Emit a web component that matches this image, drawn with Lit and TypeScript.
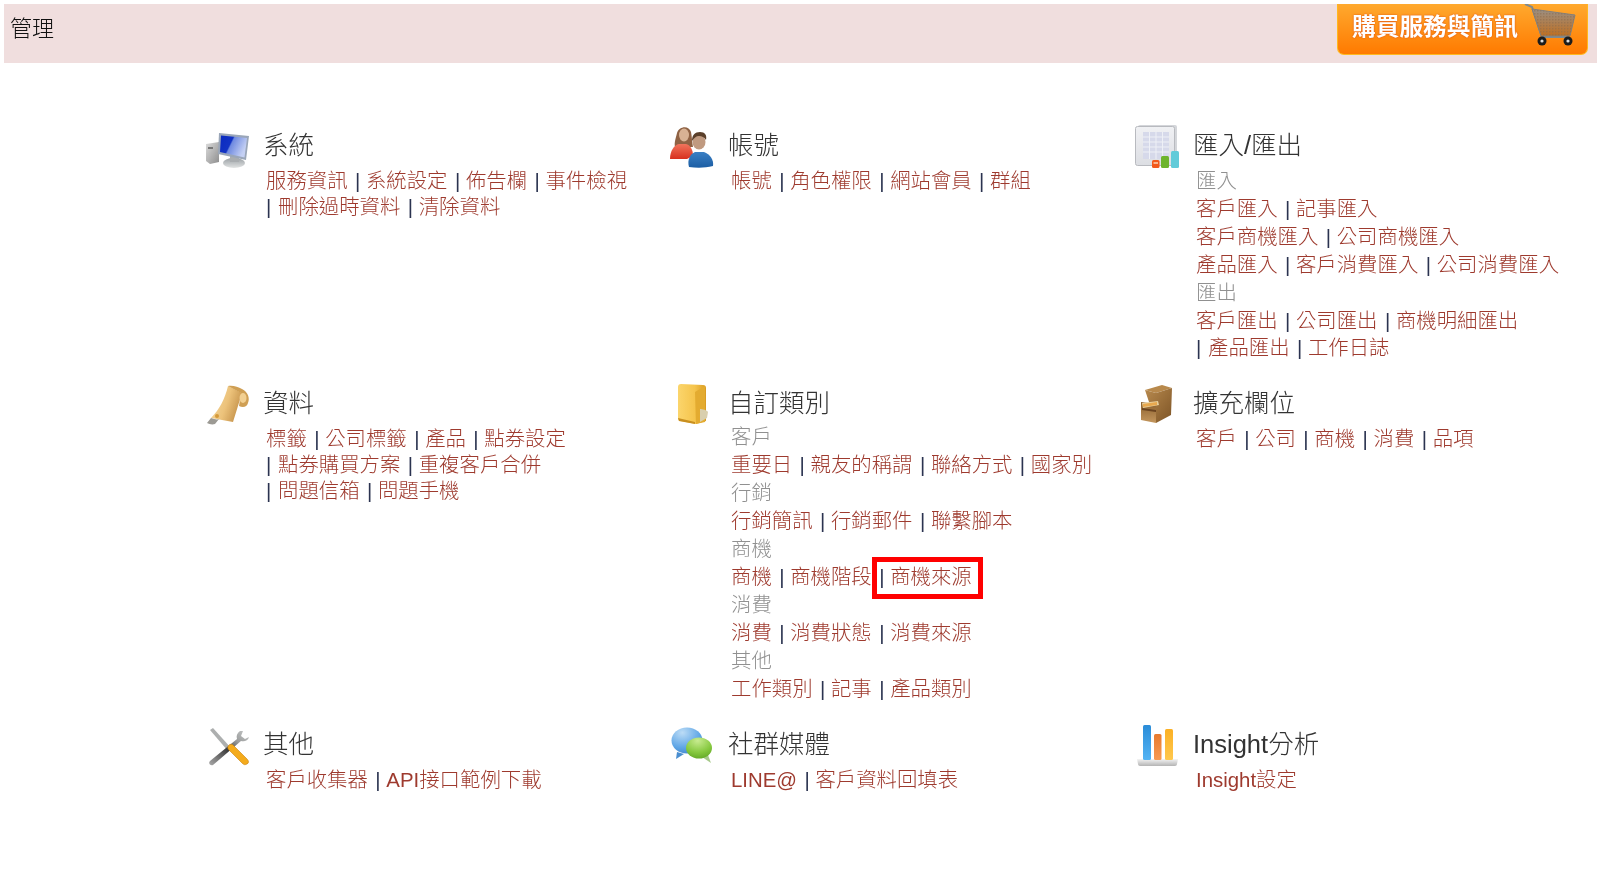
import { LitElement, html, css, svg, nothing } from "lit";
import { customElement } from "lit/decorators.js";

type Line = { label?: string; links?: string[]; wrapped?: boolean; boxed?: string };
type Section = { title: string; icon: string; kind?: string; lines: Line[] };

const icons: Record<string, unknown> = {
  monitor: svg`<defs>
      <linearGradient id="m1" x1="0" x2="1" y1="0" y2="0.4"><stop offset="0" stop-color="#0a2ac0"/><stop offset=".45" stop-color="#1233c4"/><stop offset=".5" stop-color="#6f8ae0"/><stop offset="1" stop-color="#c4d0f4"/></linearGradient>
      <linearGradient id="m2" x1="0" x2="1" y1="0" y2="1"><stop offset="0" stop-color="#dcdcdc"/><stop offset="1" stop-color="#8d8d8d"/></linearGradient>
      <linearGradient id="m3" x1="0" x2="0" y1="0" y2="1"><stop offset="0" stop-color="#9aa0a4"/><stop offset="1" stop-color="#e2e4e4"/></linearGradient>
    </defs>
    <path d="M2 22l13-2v20l-9 2-4-3z" fill="url(#m2)"/>
    <path d="M4 25h5v2H4z" fill="#777"/>
    <ellipse cx="30" cy="41" rx="11" ry="5" fill="url(#m3)"/>
    <path d="M26 33h9v7h-9z" fill="#a9adb0"/>
    <path d="M15 11l30 3-3 24-28-6z" fill="#9aa6b8"/>
    <path d="M17 13.500l26 2.500-2.500 19.500L16 30z" fill="url(#m1)"/>`,
  users: svg`<defs>
      <linearGradient id="u1" x1="0" x2="0" y1="0" y2="1"><stop offset="0" stop-color="#f0745c"/><stop offset="1" stop-color="#d8301e"/></linearGradient>
      <linearGradient id="u2" x1="0" x2="0" y1="0" y2="1"><stop offset="0" stop-color="#3b80c4"/><stop offset="1" stop-color="#1c5ea4"/></linearGradient>
    </defs>
    <path d="M6 25c-1-5 1-9 2-14 2-7 12-8 14-1 1 5 1 10 2 15z" fill="#8f6244"/>
    <ellipse cx="15" cy="13" rx="5" ry="6.500" fill="#d8b294"/>
    <path d="M1 37c0-8 4-14 9-15h7c4 1 7 5 7 12l-6 3z" fill="url(#u1)"/>
    <path d="M20 45c-2-7 1-13 6-15h9c6 2 10 8 9 14-8 2-16 2-24 1z" fill="url(#u2)"/>
    <ellipse cx="30" cy="20" rx="6.500" ry="7.500" fill="#c09a80"/>
    <path d="M23 19c0-6 3-9 8-9s7 3 6 8c-2-3-4-4-7-4s-5 2-7 5z" fill="#5a3f2a"/>`,
  table: svg`<defs>
      <linearGradient id="t1" x1="0" x2="0" y1="0" y2="1"><stop offset="0" stop-color="#f0f1f4"/><stop offset="1" stop-color="#dcdee3"/></linearGradient>
    </defs>
    <rect x="4" y="3" width="39" height="39" rx="2" fill="#d4d6da"/>
    <rect x="1.500" y="4.500" width="39" height="39" rx="2" fill="url(#t1)" stroke="#b8babf"/>
    <rect x="9" y="10" width="26" height="27" fill="#d6d9ea"/>
    <path d="M9 15h26M9 20h26M9 25h26M9 30h26M15.500 10v27M22 10v27M28.500 10v27" stroke="#eef0f6" stroke-width="1"/>
    <rect x="18" y="38" width="7.500" height="8" rx="1.500" fill="#f2591c"/>
    <rect x="19.500" y="40" width="4.500" height="2" fill="#fbb48c"/>
    <rect x="27" y="34" width="8" height="12" rx="1.500" fill="#6db42c"/>
    <rect x="37" y="29" width="8" height="17" rx="1.500" fill="#62cbd9"/>`,
  scroll: svg`<defs>
      <linearGradient id="s1" x1="0" x2="1" y1="0" y2="0.4"><stop offset="0" stop-color="#f6dca4"/><stop offset=".6" stop-color="#ecc27a"/><stop offset="1" stop-color="#c8964e"/></linearGradient>
    </defs>
    <path d="M24 6l14 7-9 29-22-4c8-8 14-19 17-32z" fill="url(#s1)"/>
    <path d="M24 6c5-1 10 1 14 3 6 3 8 9 6 14-1 4-5 5-9 3l2-13z" fill="#cf9f54"/>
    <ellipse cx="39" cy="18" rx="3.500" ry="5" fill="#f2d092"/>
    <path d="M7 38c3 1 6 2 8 1l-4 5c-3 1-6 0-8-1z" fill="#9c9a94"/>
    <circle cx="13" cy="36" r="2" fill="#d59a3a"/>`,
  folder: svg`<defs>
      <linearGradient id="f1" x1="0" x2="1" y1="0" y2="0"><stop offset="0" stop-color="#fbd56c"/><stop offset=".6" stop-color="#f5c44c"/><stop offset="1" stop-color="#d99b22"/></linearGradient>
    </defs>
    <path d="M9 7c0-2 1-3 3-3l22 1c2 0 3 1 3 3v33l-10 3-16-3c-1 0-2-1-2-2z" fill="url(#f1)"/>
    <path d="M26 12l10-6v36l-9 2z" fill="#e3ab30"/>
    <path d="M31 29c2 0 7 1 8 3l-1 6-7 4z" fill="#d9cfae"/>
    <path d="M9 38l17 4v2l-16-3z" fill="#c88f20"/>`,
  cabinet: svg`<defs>
      <linearGradient id="c1" x1="0" x2="1" y1="0" y2="1"><stop offset="0" stop-color="#b88a4e"/><stop offset="1" stop-color="#7d5426"/></linearGradient>
      <linearGradient id="c2" x1="0" x2="0" y1="0" y2="1"><stop offset="0" stop-color="#8a5f2c"/><stop offset="1" stop-color="#c4975e"/></linearGradient>
    </defs>
    <path d="M11 10l17-5 10 3-16 5z" fill="#b8894c"/>
    <path d="M11 10l11 3 16-5-1 27-15 8z" fill="url(#c1)"/>
    <path d="M7 22l15 2v19l-15-3z" fill="url(#c2)"/>
    <path d="M8 23l16-2 1 4-16 3z" fill="#e8cf9c"/>
    <path d="M9 24l14-2v3l-14 2z" fill="#e8a84e"/>
    <path d="M8 28l14 2v2l-14-2z" fill="#6b4420"/>`,
  tools: svg`<defs>
      <linearGradient id="w1" x1="0" x2="1" y1="1" y2="0"><stop offset="0" stop-color="#aaa"/><stop offset=".45" stop-color="#3c3c3c"/><stop offset=".7" stop-color="#9a9c9c"/><stop offset="1" stop-color="#c8caca"/></linearGradient>
    </defs>
    <path d="M6 9l3-2 18 20-3 3z" fill="#adafaf"/>
    <path d="M36 10c-3 2-4 5-3 8L6 40c-2 2 0 5 3 4l28-24c3 1 7 0 8-4l-4 2-4-3 2-5z" fill="url(#w1)"/>
    <path d="M25 24c1-1 3-1 4 0l14 14c2 2 2 4 0 5s-3 1-5-1L25 29c-2-2-1-4 0-5z" fill="#f4ab1c" stroke="#c8820e" stroke-width=".6"/>`,
  chat: svg`<defs>
      <radialGradient id="h1" cx=".35" cy=".2" r=".95"><stop offset="0" stop-color="#bcdcf6"/><stop offset=".6" stop-color="#5fa6e6"/><stop offset="1" stop-color="#3a7ec6"/></radialGradient>
      <radialGradient id="h2" cx=".45" cy=".15" r=".95"><stop offset="0" stop-color="#c8eb90"/><stop offset=".6" stop-color="#85c83e"/><stop offset="1" stop-color="#5ca222"/></radialGradient>
    </defs>
    <path d="M8 31l-1 7 8-5z" fill="#4a8ed0"/>
    <ellipse cx="18" cy="19.500" rx="15.500" ry="13" fill="url(#h1)"/>
    <path d="M33 36l9 6-3-8z" fill="#a6c98a"/>
    <ellipse cx="30" cy="27" rx="13" ry="10.500" fill="url(#h2)"/>`,
  insight: svg`<defs>
      <linearGradient id="i1" x1="0" x2="0" y1="0" y2="1"><stop offset="0" stop-color="#2a8cd8"/><stop offset="1" stop-color="#54b4f4"/></linearGradient>
      <linearGradient id="i2" x1="0" x2="0" y1="0" y2="1"><stop offset="0" stop-color="#e87a2e"/><stop offset="1" stop-color="#f89a52"/></linearGradient>
      <linearGradient id="i3" x1="0" x2="0" y1="0" y2="1"><stop offset="0" stop-color="#fbb024"/><stop offset="1" stop-color="#ffc84e"/></linearGradient>
      <linearGradient id="i4" x1="0" x2="0" y1="0" y2="1"><stop offset="0" stop-color="#f4f4f4"/><stop offset="1" stop-color="#b4b4b4"/></linearGradient>
    </defs>
    <path d="M3 38h41l-1 5c0 1-1 2-2 2H6c-1 0-2-1-2-2z" fill="url(#i4)"/>
    <rect x="9" y="4" width="8" height="35" rx="1.500" fill="url(#i1)"/>
    <rect x="20" y="13" width="7.500" height="26" rx="1.500" fill="url(#i2)"/>
    <rect x="31" y="8" width="8" height="31" rx="1.500" fill="url(#i3)"/>`,
};

const sections: Section[] = [
  { title: "系統", icon: "monitor", kind: "first", lines: [
    { links: ["服務資訊", "系統設定", "佈告欄", "事件檢視"] },
    { wrapped: true, links: ["刪除過時資料", "清除資料"] },
  ] },
  { title: "帳號", icon: "users", kind: "first", lines: [
    { links: ["帳號", "角色權限", "網站會員", "群組"] },
  ] },
  { title: "匯入/匯出", icon: "table", kind: "grouped roomy", lines: [
    { label: "匯入" },
    { links: ["客戶匯入", "記事匯入"] },
    { links: ["客戶商機匯入", "公司商機匯入"] },
    { links: ["產品匯入", "客戶消費匯入", "公司消費匯入"] },
    { label: "匯出" },
    { links: ["客戶匯出", "公司匯出", "商機明細匯出"] },
    { wrapped: true, links: ["產品匯出", "工作日誌"] },
  ] },
  { title: "資料", icon: "scroll", lines: [
    { links: ["標籤", "公司標籤", "產品", "點券設定"] },
    { wrapped: true, links: ["點券購買方案", "重複客戶合併"] },
    { wrapped: true, links: ["問題信箱", "問題手機"] },
  ] },
  { title: "自訂類別", icon: "folder", kind: "grouped", lines: [
    { label: "客戶" },
    { links: ["重要日", "親友的稱謂", "聯絡方式", "國家別"] },
    { label: "行銷" },
    { links: ["行銷簡訊", "行銷郵件", "聯繫腳本"] },
    { label: "商機" },
    { links: ["商機", "商機階段"], boxed: "商機來源" },
    { label: "消費" },
    { links: ["消費", "消費狀態", "消費來源"] },
    { label: "其他" },
    { links: ["工作類別", "記事", "產品類別"] },
  ] },
  { title: "擴充欄位", icon: "cabinet", lines: [
    { links: ["客戶", "公司", "商機", "消費", "品項"] },
  ] },
  { title: "其他", icon: "tools", lines: [
    { links: ["客戶收集器", "API接口範例下載"] },
  ] },
  { title: "社群媒體", icon: "chat", lines: [
    { links: ["LINE@", "客戶資料回填表"] },
  ] },
  { title: "Insight分析", icon: "insight", lines: [
    { links: ["Insight設定"] },
  ] },
];

@customElement("app-root")
export class AppRoot extends LitElement {
  static styles = css`
    :host {
      display: block;
      width: 1601px;
      height: 871px;
      background: #fff;
      overflow: hidden;
      font-family: "Liberation Sans", "Noto Sans CJK TC", sans-serif;
      font-weight: 300;
      filter: blur(0.35px);
    }
    .banner {
      margin: 4px 4px 0;
      height: 59px;
      background: #f0dede;
      display: flex;
      justify-content: space-between;
      align-items: flex-start;
    }
    .page-title {
      margin: 8px 0 0 6px;
      font-size: 22px;
      line-height: 34px;
      color: #111;
    }
    .buy {
      margin-right: 9px;
      width: 251px;
      height: 51px;
      box-sizing: border-box;
      padding-left: 14px;
      display: flex;
      align-items: flex-start;
      background: linear-gradient(#ffa92e, #ff7a00);
      border: 1px solid #ffb81e;
      border-top: 0;
      border-radius: 0 0 7px 7px;
      color: #fff;
      font-size: 23.7px;
      font-weight: 700;
      line-height: 46px;
      white-space: nowrap;
      text-shadow: 0 0 2px #d9480f;
    }
    .cart {
      width: 56px;
      height: 48px;
      flex: none;
      margin-left: auto;
      margin-right: 9px;
    }
    .grid {
      display: grid;
      grid-template-columns: repeat(3, 465px);
      grid-template-rows: 258px 341px auto;
      padding: 59px 0 0 204px;
    }
    .section {
      display: flex;
      gap: 11px;
      align-items: flex-start;
    }
    .icon {
      width: 48px;
      height: 48px;
      flex: none;
      display: block;
    }
    .body {
      padding-top: 7px;
      min-width: 0;
    }
    .title {
      font-size: 25.5px;
      line-height: 32px;
      color: #333;
      margin-bottom: 7px;
      white-space: nowrap;
    }
    .first .title {
      margin-bottom: 7px;
    }
    .grouped .title {
      margin-bottom: 4px;
    }
    .roomy .title {
      margin-bottom: 6px;
    }
    .lines {
      padding-left: 3px;
      font-size: 20.4px;
    }
    .line {
      height: 26px;
      line-height: 26px;
      white-space: nowrap;
    }
    .grouped .line {
      height: 28px;
      line-height: 28px;
    }
    .grouped .line.wrapped {
      height: 26px;
      line-height: 26px;
    }
    .label {
      color: #909090;
    }
    .link {
      color: #9e3a2e;
    }
    .sep {
      display: inline-block;
      width: 11px;
      margin-left: 7.4px;
      color: #2b3350;
      font-weight: 400;
    }
    .sep.lead {
      margin-left: 0;
      width: 12px;
    }
    .boxed {
      position: relative;
      display: inline-block;
    }
    .boxed::after {
      content: "";
      position: absolute;
      left: 0;
      top: -6px;
      width: 101px;
      height: 32px;
      border: 5px solid #f00;
    }
  `;

  private renderLine(l: Line) {
    if (l.label) return html`<div class="line label">${l.label}</div>`;
    const links = l.links ?? [];
    return html`<div class="line ${l.wrapped ? "wrapped" : ""}">
      ${links.map(
        (t, i) => html`${i > 0 ? html`<span class="sep">|</span>` : l.wrapped ? html`<span class="sep lead">|</span>` : nothing}<span class="link">${t}</span>`
      )}${l.boxed
        ? html`<span class="boxed"><span class="sep">|</span><span class="link">${l.boxed}</span></span>`
        : nothing}
    </div>`;
  }

  render() {
    return html`
      <div class="banner">
        <div class="page-title">管理</div>
        <div class="buy">
          <span>購買服務與簡訊</span>
          <svg class="cart" viewBox="0 0 56 48">
            <defs>
              <linearGradient id="b1" x1="0" x2="0" y1="0" y2="1">
                <stop offset="0" stop-color="#9a8f84" />
                <stop offset="1" stop-color="#c06f20" />
              </linearGradient>
              <pattern id="b2" width="3" height="3" patternUnits="userSpaceOnUse">
                <rect width="3" height="3" fill="none" />
                <rect width="1.500" height="1.500" fill="#8a6a4c" opacity=".5" />
              </pattern>
            </defs>
            <path d="M3 0l7 3 10 30h27" fill="none" stroke="#7f8a90" stroke-width="2" />
            <path d="M10 5l43 6-5 21H19z" fill="url(#b1)" stroke="#85807a" stroke-width="1" />
            <path d="M10 5l43 6-5 21H19z" fill="url(#b2)" />
            <circle cx="20" cy="37" r="4.500" fill="#1c1c1c" />
            <circle cx="20" cy="37" r="1.600" fill="#ddd" />
            <circle cx="46" cy="37" r="4.500" fill="#1c1c1c" />
            <circle cx="46" cy="37" r="1.600" fill="#ddd" />
          </svg>
        </div>
      </div>
      <div class="grid">
        ${sections.map(
          (s) => html`<div class="section ${s.kind ?? ""}">
            <svg class="icon" viewBox="0 0 48 48">${icons[s.icon]}</svg>
            <div class="body">
              <div class="title">${s.title}</div>
              <div class="lines">${s.lines.map((l) => this.renderLine(l))}</div>
            </div>
          </div>`
        )}
      </div>
    `;
  }
}
